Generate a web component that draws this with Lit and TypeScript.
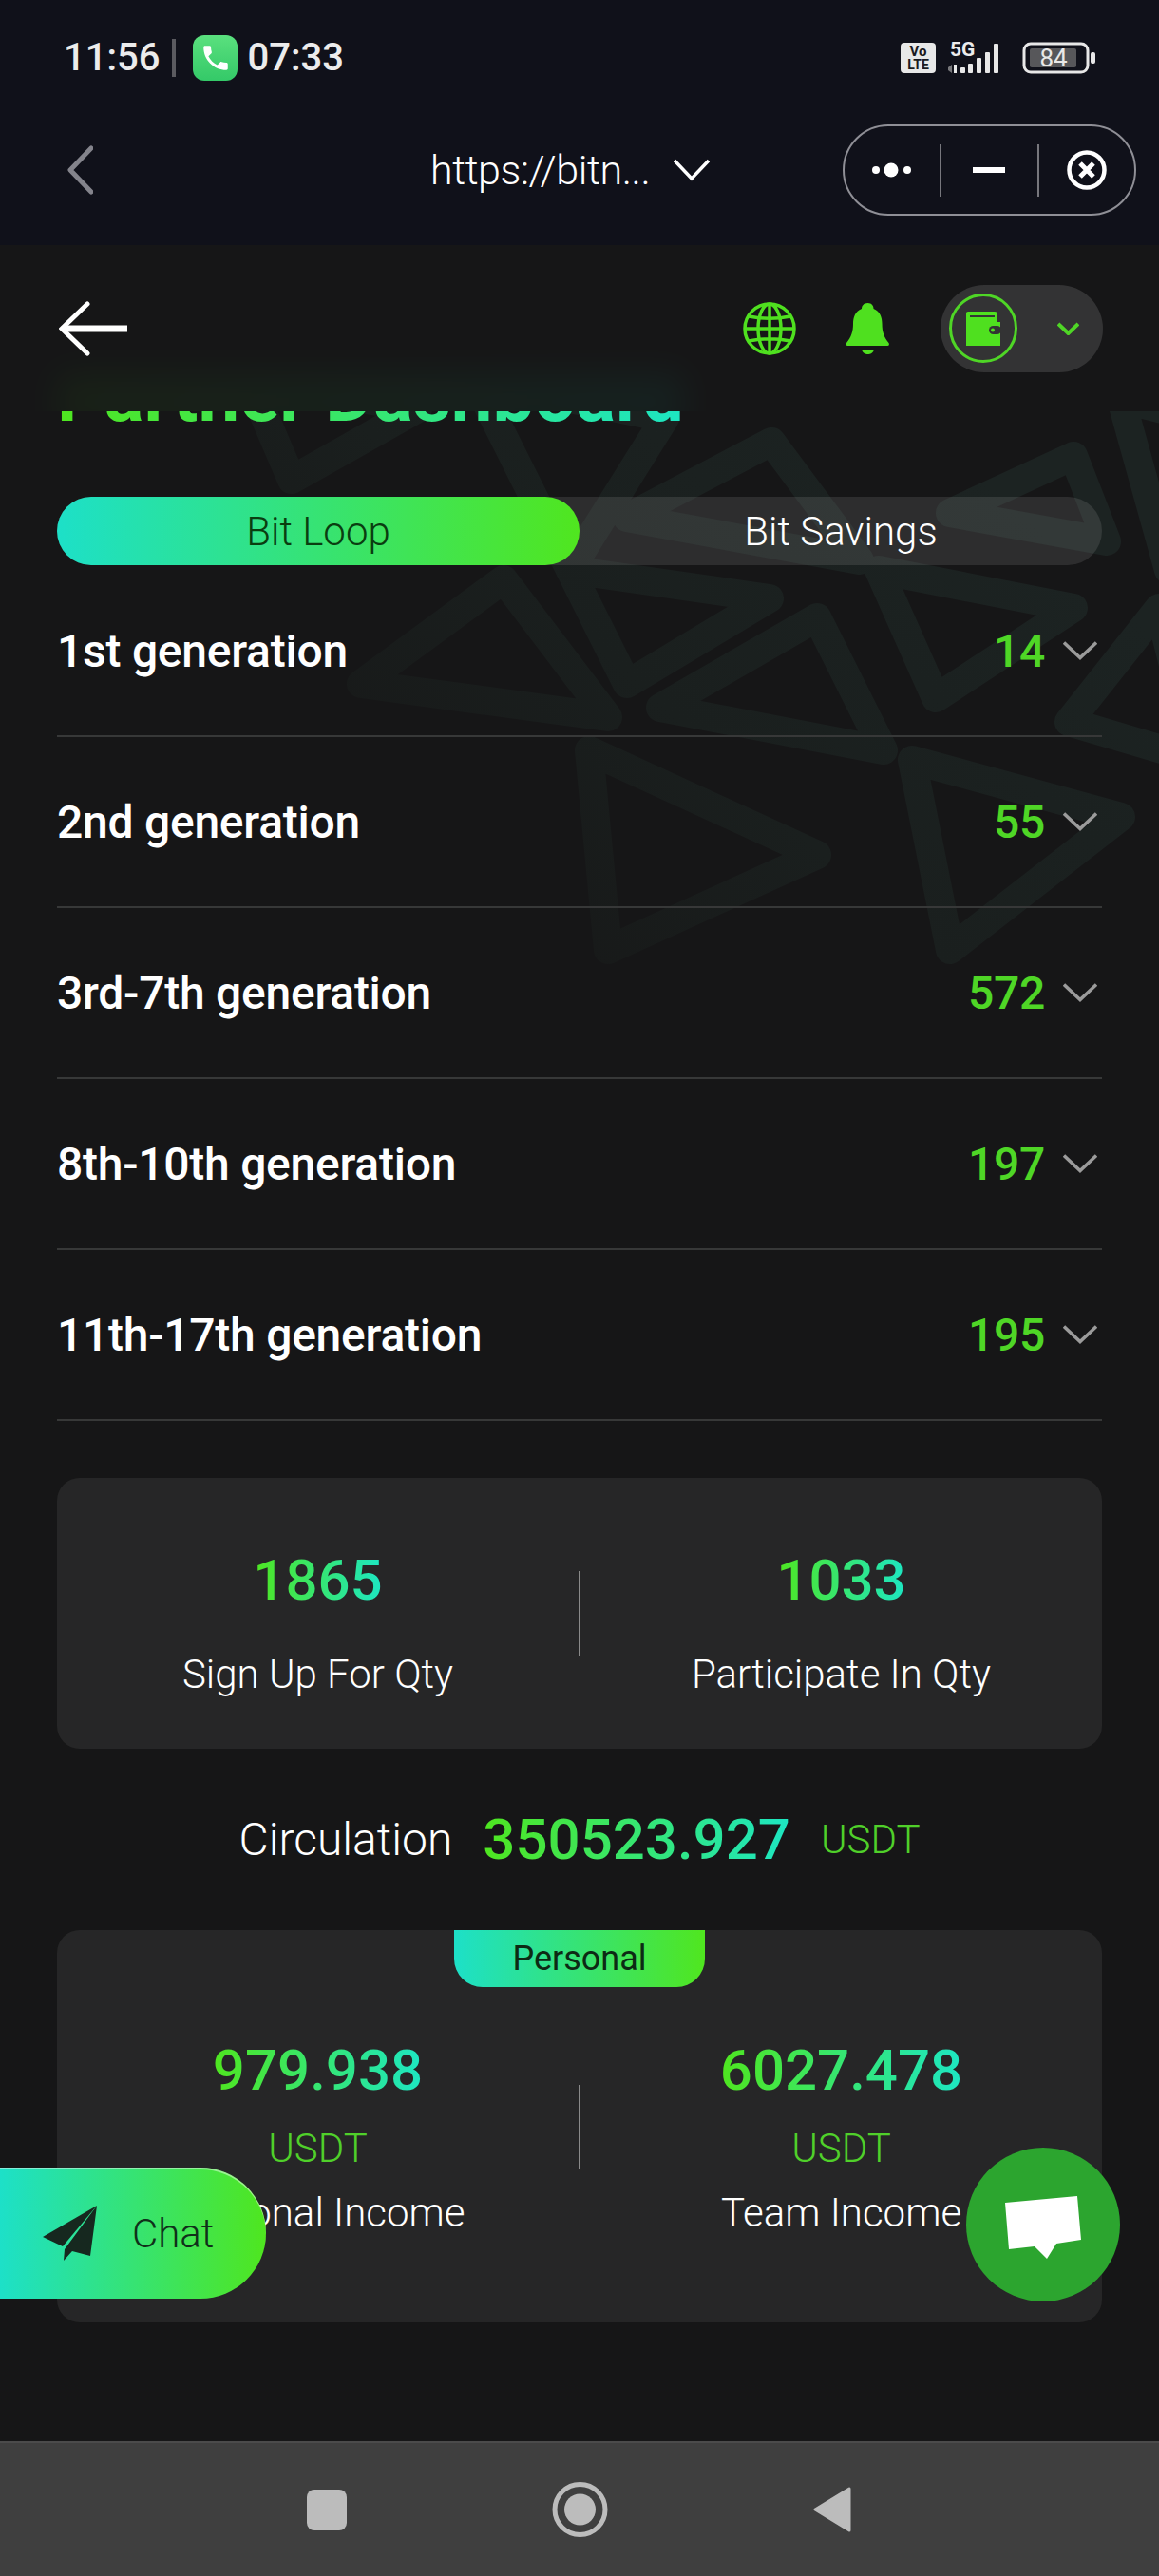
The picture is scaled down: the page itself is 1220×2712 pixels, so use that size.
import { LitElement, html, css, svg } from 'lit';
import { customElement } from 'lit/decorators.js';

// ── Partner dashboard ─────────────────────────────────────────────────────────
//
// Phone screenshot: system status bar, in-app browser bar, sticky page header
// with a half hidden title, generation list and two stat cards.

interface Generation {
  label: string;
  count: number;
}

const GENERATIONS: Generation[] = [
  { label: '1st generation', count: 14 },
  { label: '2nd generation', count: 55 },
  { label: '3rd-7th generation', count: 572 },
  { label: '8th-10th generation', count: 197 },
  { label: '11th-17th generation', count: 195 },
];

// faint background triangles, in page coordinates
const PATTERN: string[] = [
  '262,400 307,505 440,430',
  '500,400 600,600 700,440',
  '812,465 660,545 905,590',
  '1130,480 1000,540 1165,570',
  '600,600 810,630 660,720',
  '925,600 1130,640 985,735',
  '530,610 380,720 640,755',
  '860,650 695,745 930,790',
  '1220,640 1125,760 1260,800',
  '1180,420 1230,600 1300,450',
  '620,790 640,1000 860,900',
  '960,800 1000,1000 1180,860',
];

@customElement('app-root')
export class AppRoot extends LitElement {
  static styles = css`
    :host {
      display: flex;
      flex-direction: column;
      position: relative;
      width: 1220px;
      height: 2712px;
      overflow: hidden;
      background: #161617;
      font-family: Roboto, 'Liberation Sans', sans-serif;
      color: #fff;
    }

    svg {
      display: block;
      flex: none;
    }

    /* system + browser chrome */
    .chrome {
      height: 258px;
      background: #10111a;
    }

    .status {
      display: flex;
      align-items: center;
      height: 121px;
      padding: 0 66px 0 67px;
      font-size: 40px;
      font-weight: 500;
      color: #ececec;
    }

    .status .sep {
      width: 4px;
      height: 40px;
      margin: 0 18px 0 13px;
      background: #5b5b60;
    }

    .phone {
      display: flex;
      align-items: center;
      justify-content: center;
      width: 47px;
      height: 48px;
      margin-right: 10px;
      border-radius: 12px;
      background: linear-gradient(180deg, #5ae07e, #34c968);
    }

    .status .right {
      display: flex;
      align-items: center;
      margin-left: auto;
    }

    .nav {
      display: flex;
      align-items: center;
      height: 116px;
      padding: 0 24px 0 71px;
    }

    .url {
      margin: 0 25px 0 355px;
      font-size: 43px;
      font-weight: 300;
      letter-spacing: -0.4px;
      white-space: nowrap;
    }

    .capsule {
      display: flex;
      align-items: center;
      box-sizing: border-box;
      width: 309px;
      height: 96px;
      margin-left: auto;
      border: 2px solid #8f8f96;
      border-radius: 48px;
    }

    .capsule .slot {
      display: flex;
      flex: 1;
      align-items: center;
      justify-content: center;
    }

    .capsule .line {
      width: 2px;
      height: 55px;
      background: #77777d;
    }

    /* page header */
    .header {
      display: flex;
      align-items: center;
      position: relative;
      flex: none;
      box-sizing: border-box;
      height: 175px;
      padding: 0 59px 0 62px;
      overflow: hidden;
      background: #161617;
    }

    .header::after {
      content: '';
      position: absolute;
      left: 60px;
      width: 660px;
      bottom: -20px;
      height: 60px;
      background: linear-gradient(90deg, #4fe61f, #1de6c3);
      opacity: 0.05;
      filter: blur(18px);
    }

    .globe {
      margin-left: auto;
    }

    .bell {
      margin-left: 53px;
    }

    .wallet-pill {
      display: flex;
      align-items: center;
      box-sizing: border-box;
      width: 171px;
      height: 92px;
      margin-left: 54px;
      padding-left: 9px;
      border-radius: 46px;
      background: #333334;
    }

    .wallet-ring {
      margin-right: 42px;
    }

    /* page body */
    .main {
      position: relative;
      isolation: isolate;
      flex: 1;
    }

    .pattern {
      position: absolute;
      top: 0;
      left: 0;
      z-index: -1;
    }

    .title-clip {
      display: flex;
      align-items: flex-end;
      height: 12px;
      padding-left: 60px;
      overflow: hidden;
    }

    .title {
      flex: none;
      font-size: 78px;
      line-height: 56px;
      height: 56px;
      font-weight: 700;
      white-space: nowrap;
      color: transparent;
      background: linear-gradient(90deg, #4fe61f, #1de6c3);
      -webkit-background-clip: text;
      background-clip: text;
    }

    .tabs {
      display: flex;
      height: 72px;
      margin: 78px 60px 0;
      border-radius: 36px;
      background: rgba(255, 255, 255, 0.1);
      font-size: 42px;
      font-weight: 300;
    }

    .tab {
      display: flex;
      flex: 1;
      align-items: center;
      justify-content: center;
      border-radius: 36px;
    }

    .tab.active {
      color: #0a3d10;
      background: linear-gradient(90deg, #1de0c8, #50e61f);
    }

    .rows {
      margin: 1px 60px 0;
    }

    .row {
      display: flex;
      align-items: center;
      box-sizing: border-box;
      height: 180px;
      padding-right: 5px;
      border-bottom: 2px solid #373838;
      font-size: 48px;
      font-weight: 500;
      letter-spacing: -0.25px;
    }

    .row .count {
      margin: 0 19px 0 auto;
      color: #4fd626;
    }

    .card {
      margin: 0 60px;
      border-radius: 24px;
      background: #262627;
    }

    .card.qty {
      height: 285px;
      margin-top: 60px;
      padding-top: 73px;
      box-sizing: border-box;
    }

    .card.personal {
      height: 413px;
    }

    .cols {
      display: grid;
      grid-template-columns: 1fr 2px 1fr;
    }

    .col {
      display: flex;
      flex-direction: column;
      align-items: center;
    }

    .divider {
      height: 89px;
      margin-top: 25px;
      background: #8a8a8a;
    }

    .personal .divider {
      margin-top: 50px;
    }

    .grad {
      font-size: 60px;
      line-height: 70px;
      font-weight: 500;
      color: transparent;
      background: linear-gradient(90deg, #4fe61f, #1de6c3);
      -webkit-background-clip: text;
      background-clip: text;
    }

    .label {
      font-size: 42px;
      line-height: 50px;
      font-weight: 300;
      white-space: nowrap;
    }

    .qty .label {
      margin-top: 39px;
    }

    .personal .label {
      margin-top: 18px;
    }

    .usdt {
      font-size: 42px;
      line-height: 50px;
      font-weight: 300;
      color: #50d02a;
    }

    .personal .usdt {
      margin-top: 22px;
    }

    .circulation {
      display: flex;
      align-items: center;
      justify-content: center;
      gap: 32px;
      height: 191px;
    }

    .circulation .name {
      font-size: 48px;
      font-weight: 300;
    }

    .personal-tab {
      display: flex;
      align-items: center;
      justify-content: center;
      width: 264px;
      height: 60px;
      margin: 0 auto 53px;
      border-radius: 0 0 30px 30px;
      background: linear-gradient(90deg, #1de0c8, #50e61f);
      color: #0d2a14;
      font-size: 36px;
    }

    /* floating buttons */
    .chat {
      display: flex;
      align-items: center;
      position: absolute;
      left: 0;
      top: 2282px;
      box-sizing: border-box;
      width: 280px;
      height: 138px;
      padding-left: 45px;
      gap: 36px;
      border-radius: 0 69px 69px 0;
      background: linear-gradient(90deg, #1de0c8, #4fe61f);
      box-shadow: inset 0 2px 0 rgba(255, 255, 255, 0.45);
      color: #10301a;
      font-size: 42px;
      font-weight: 300;
    }

    .fab {
      display: flex;
      align-items: center;
      justify-content: center;
      position: absolute;
      left: 1017px;
      top: 2261px;
      width: 162px;
      height: 162px;
      border-radius: 50%;
      background: #2ca52f;
    }

    .fab svg {
      margin-top: 6px;
    }

    /* android navigation */
    .softkeys {
      display: flex;
      align-items: center;
      flex: none;
      box-sizing: border-box;
      height: 142px;
      padding-left: 323px;
      border-top: 2px solid #4b4b4b;
      background: #3f3f3f;
    }

    .softkeys .square {
      width: 42px;
      height: 43px;
      border-radius: 8px;
      background: #bcbcbc;
    }

    .softkeys .home {
      margin: 0 216px;
    }
  `;

  private renderStatus() {
    return html`
      <div class="status">
        <span>11:56</span>
        <span class="sep"></span>
        <span class="phone">
          <svg width="34" height="34" viewBox="0 0 24 24" fill="#fff">
            <path d="M6.62 10.79c1.44 2.83 3.76 5.14 6.59 6.59l2.2-2.2c.27-.27.67-.36 1.02-.24 1.12.37 2.33.57 3.57.57.55 0 1 .45 1 1V20c0 .55-.45 1-1 1-9.39 0-17-7.61-17-17 0-.55.45-1 1-1h3.5c.55 0 1 .45 1 1 0 1.25.2 2.45.57 3.57.11.35.03.74-.25 1.02l-2.2 2.2z" />
          </svg>
        </span>
        <span>07:33</span>
        <div class="right">
          <svg width="206" height="36" viewBox="0 0 206 36" font-family="Roboto, sans-serif">
            <rect x="0" y="2" width="37" height="32" rx="4" fill="#e8e8e8" />
            <text x="18.5" y="16" font-size="15" font-weight="700" text-anchor="middle" fill="#1a1a20">Vo</text>
            <text x="18.5" y="30" font-size="14" font-weight="700" text-anchor="middle" fill="#1a1a20">LTE</text>
            <text x="52" y="16" font-size="21" font-weight="700" fill="#ececec">5G</text>
            <path d="M50 28l4-3v9l-4-3z" fill="#77777a" />
            <rect x="56" y="25" width="3" height="9" fill="#e8e8e8" />
            <rect x="63" y="28" width="5" height="6" rx="1" fill="#e8e8e8" />
            <rect x="71" y="24" width="5" height="10" rx="1" fill="#e8e8e8" />
            <rect x="80" y="18" width="5" height="16" rx="1" fill="#e8e8e8" />
            <rect x="89" y="12" width="5" height="22" rx="1" fill="#e8e8e8" />
            <rect x="98" y="3" width="5" height="31" rx="1" fill="#e8e8e8" />
            <rect x="130" y="3" width="67" height="30" rx="7" fill="none" stroke="#e8e8e8" stroke-width="3" />
            <rect x="136" y="8" width="49" height="20" rx="2" fill="#57575a" />
            <text x="161" y="27" font-size="26" font-weight="400" text-anchor="middle" fill="#e8e8e8">84</text>
            <rect x="200" y="12" width="5" height="12" rx="2" fill="#e8e8e8" />
          </svg>
        </div>
      </div>
    `;
  }

  private renderBrowserBar() {
    return html`
      <div class="nav">
        <svg width="27" height="52" viewBox="0 0 27 52" fill="none" stroke="#84848c" stroke-width="5" stroke-linecap="round" stroke-linejoin="round">
          <path d="M25 3L3 26l22 23" />
        </svg>
        <span class="url">https://bitn...</span>
        <svg width="38" height="24" viewBox="0 0 38 24" fill="none" stroke="#fff" stroke-width="3.5">
          <path d="M1 2l18 19L37 2" />
        </svg>
        <div class="capsule">
          <div class="slot">
            <svg width="42" height="16" viewBox="0 0 42 16" fill="#fff">
              <circle cx="4" cy="8" r="4" />
              <circle cx="20" cy="8" r="7.5" />
              <circle cx="37" cy="8" r="4" />
            </svg>
          </div>
          <div class="line"></div>
          <div class="slot">
            <svg width="34" height="6" viewBox="0 0 34 6"><rect width="34" height="6" fill="#fff" /></svg>
          </div>
          <div class="line"></div>
          <div class="slot">
            <svg width="42" height="42" viewBox="0 0 42 42" fill="none" stroke="#fff">
              <circle cx="21" cy="21" r="18.5" stroke-width="4.5" />
              <path d="M14 14l14 14M28 14L14 28" stroke-width="5" />
            </svg>
          </div>
        </div>
      </div>
    `;
  }

  private renderHeader() {
    return html`
      <div class="header">
        <svg width="72" height="58" viewBox="0 0 72 58" fill="none" stroke="#fff" stroke-width="5">
          <path d="M30 3L3 29l27 26" stroke-linecap="round" />
          <path d="M4 29h68" stroke-width="7" />
        </svg>
        <svg class="globe" width="56" height="56" viewBox="0 0 56 56" fill="none" stroke="#4fe01f" stroke-width="3.500">
          <circle cx="28" cy="28" r="26" />
          <ellipse cx="28" cy="28" rx="12" ry="26" />
          <path d="M28 2v52M2 28h52M6 15c14 3 30 3 44 0M6 41c14-3 30-3 44 0" />
        </svg>
        <svg class="bell" width="45" height="54" viewBox="0 0 45 54" fill="#4fe01f">
          <path d="M22.5 0c4 0 6 3 6 6 7 3 9 9 9 16 0 8 2 14 7 20 1 2 0 3-2 3H2c-2 0-3-1-2-3 5-6 7-12 7-20 0-7 2-13 9-16 0-3 2-6 6.500-6z" />
          <path d="M16 49h13c-1 4-4 5-6.500 5s-5.500-1-6.500-5z" />
        </svg>
        <div class="wallet-pill">
          <svg class="wallet-ring" width="72" height="73" viewBox="0 0 72 73">
            <ellipse cx="36" cy="36.500" rx="34.500" ry="35" fill="none" stroke="#4fd626" stroke-width="3" />
            <path d="M18 21a2 2 0 012-2h28a3 3 0 013 3v8h3v25H18z" fill="#4fe01f" />
            <rect x="22" y="23" width="26" height="2" fill="#333334" />
            <rect x="42" y="34" width="13" height="9" rx="4.500" fill="#333334" />
            <circle cx="46" cy="38.500" r="2" fill="#4fe01f" />
          </svg>
          <svg width="23" height="14" viewBox="0 0 23 14" fill="none" stroke="#4fd626" stroke-width="4">
            <path d="M1 2l10.500 10L22 2" />
          </svg>
        </div>
      </div>
    `;
  }

  private renderPattern() {
    return html`
      <svg class="pattern" width="1220" height="600" viewBox="0 433 1220 600">
        <defs>
          <linearGradient id="fade" gradientUnits="userSpaceOnUse" x1="1000" y1="470" x2="500" y2="1010">
            <stop offset="0" stop-color="#1c2322" />
            <stop offset="0.55" stop-color="#1a1f1e" />
            <stop offset="1" stop-color="#171818" />
          </linearGradient>
        </defs>
        ${PATTERN.map(
          points => svg`<polygon points=${points} fill="none" stroke="url(#fade)" stroke-width="30" stroke-linejoin="round" />`,
        )}
      </svg>
    `;
  }

  private renderRow(gen: Generation) {
    return html`
      <div class="row">
        <span>${gen.label}</span>
        <span class="count">${gen.count}</span>
        <svg width="36" height="20" viewBox="0 0 36 20" fill="none" stroke="#9b9b9b" stroke-width="3.500">
          <path d="M1 1.500l17 16 17-16" />
        </svg>
      </div>
    `;
  }

  private renderSoftkeys() {
    return html`
      <div class="softkeys">
        <div class="square"></div>
        <svg class="home" width="59" height="58" viewBox="0 0 59 58">
          <circle cx="29.500" cy="29" r="26.500" fill="none" stroke="#bcbcbc" stroke-width="5" />
          <circle cx="29.500" cy="29" r="16.500" fill="#bcbcbc" />
        </svg>
        <svg width="40" height="48" viewBox="0 0 40 48">
          <path d="M38 2v44L2 24z" fill="#bcbcbc" stroke="#bcbcbc" stroke-width="3" stroke-linejoin="round" />
        </svg>
      </div>
    `;
  }

  render() {
    return html`
      <div class="chrome">${this.renderStatus()} ${this.renderBrowserBar()}</div>
      ${this.renderHeader()}
      <div class="main">
        ${this.renderPattern()}
        <div class="title-clip"><div class="title">Partner Dashboard</div></div>
        <div class="tabs">
          <div class="tab active">Bit Loop</div>
          <div class="tab">Bit Savings</div>
        </div>
        <div class="rows">${GENERATIONS.map(gen => this.renderRow(gen))}</div>
        <div class="card qty">
          <div class="cols">
            <div class="col">
              <span class="grad">1865</span>
              <span class="label">Sign Up For Qty</span>
            </div>
            <div class="divider"></div>
            <div class="col">
              <span class="grad">1033</span>
              <span class="label">Participate In Qty</span>
            </div>
          </div>
        </div>
        <div class="circulation">
          <span class="name">Circulation</span>
          <span class="grad">350523.927</span>
          <span class="usdt">USDT</span>
        </div>
        <div class="card personal">
          <div class="personal-tab">Personal</div>
          <div class="cols">
            <div class="col">
              <span class="grad">979.938</span>
              <span class="usdt">USDT</span>
              <span class="label">Personal Income</span>
            </div>
            <div class="divider"></div>
            <div class="col">
              <span class="grad">6027.478</span>
              <span class="usdt">USDT</span>
              <span class="label">Team Income</span>
            </div>
          </div>
        </div>
      </div>
      ${this.renderSoftkeys()}
      <div class="chat">
        <svg width="58" height="58" viewBox="0 0 58 58" fill="#16281f">
          <path d="M57 0L0 33l21 10z" />
          <path d="M57 0L23 46l-1 12 9-10 19 5z" />
        </svg>
        <span>Chat</span>
      </div>
      <div class="fab">
        <svg width="80" height="66" viewBox="0 0 80 66" fill="#fff">
          <path d="M0 7L76 0l4 46-26 4-10 16-13-13-27 3z" />
        </svg>
      </div>
    `;
  }
}

declare global {
  interface HTMLElementTagNameMap {
    'app-root': AppRoot;
  }
}
